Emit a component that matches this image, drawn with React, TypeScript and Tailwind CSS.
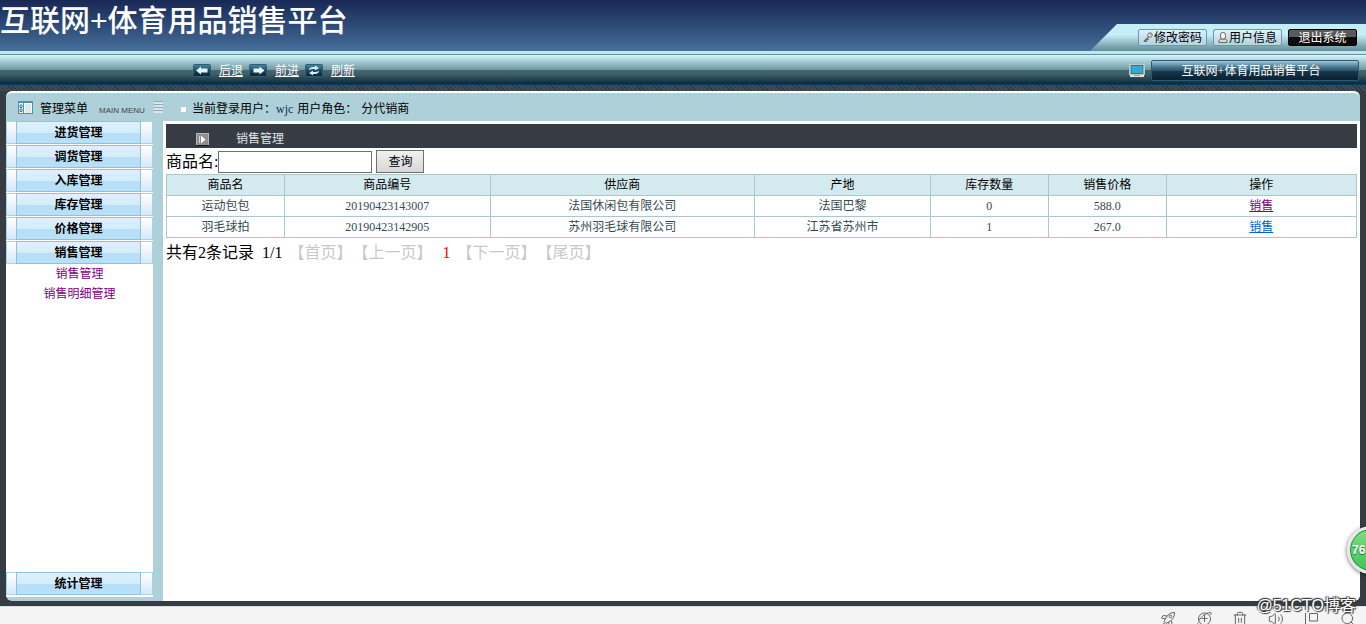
import { useState } from "react";
import { Search, Trash2, Volume2 } from "lucide-react";

interface Product {
  name: string;
  code: string;
  supplier: string;
  origin: string;
  stock: number;
  price: string;
  visited: boolean;
}

interface MenuGroup {
  title: string;
  children: string[];
}

const products: Product[] = [
  {
    name: "运动包包",
    code: "20190423143007",
    supplier: "法国休闲包有限公司",
    origin: "法国巴黎",
    stock: 0,
    price: "588.0",
    visited: true,
  },
  {
    name: "羽毛球拍",
    code: "20190423142905",
    supplier: "苏州羽毛球有限公司",
    origin: "江苏省苏州市",
    stock: 1,
    price: "267.0",
    visited: false,
  },
];

const menuGroups: MenuGroup[] = [
  { title: "进货管理", children: [] },
  { title: "调货管理", children: [] },
  { title: "入库管理", children: [] },
  { title: "库存管理", children: [] },
  { title: "价格管理", children: [] },
  { title: "销售管理", children: ["销售管理", "销售明细管理"] },
  { title: "统计管理", children: [] },
];

const columns = [
  { label: "商品名", width: "w-[9.9%]" },
  { label: "商品编号", width: "w-[17.3%]" },
  { label: "供应商", width: "w-[22.2%]" },
  { label: "产地", width: "w-[14.8%]" },
  { label: "库存数量", width: "w-[9.9%]" },
  { label: "销售价格", width: "w-[9.9%]" },
  { label: "操作", width: "w-[16%]" },
];

function ToolIcon({ kind }: { kind: "back" | "forward" | "refresh" }) {
  return (
    <svg width="18" height="13" viewBox="0 0 18 13" aria-hidden="true">
      <defs>
        <linearGradient id={`tool-${kind}`} x1="0" y1="0" x2="0" y2="1">
          <stop offset="0" stopColor="#4d8ba3" />
          <stop offset="0.5" stopColor="#1d4860" />
          <stop offset="1" stopColor="#0c2133" />
        </linearGradient>
      </defs>
      <rect x="0.5" y="0.5" width="17" height="12" rx="1" fill={`url(#tool-${kind})`} stroke="#2c5f74" />
      {kind === "back" && <path d="M3 6.5 8 2.5V4.500h6.500v4H8v2z" fill="#dff8ff" />}
      {kind === "forward" && <path d="M15.500 6.500 10.500 2.500V4.500H4.500v4h6v2z" fill="#dff8ff" />}
      {kind === "refresh" && (
        <g fill="#cdeffa">
          <path d="M4 6.200C4 4 6 3 8 3h2V1.500L14 4l-4 2.500V5H8C6.500 5 5.500 5.300 4 6.200z" />
          <path d="M14 6.800C14 9 12 10 10 10H8v1.500L4 9l4-2.500V8h2c1.500 0 2.500-.3 4-1.200z" />
        </g>
      )}
    </svg>
  );
}

function KeyIcon() {
  return (
    <svg width="10" height="11" viewBox="0 0 10 11" fill="none" aria-hidden="true">
      <path d="M5.500 5 1 9.500M2.500 8l1.500 1.500M4 6.500 5.500 8" stroke="#666" strokeWidth="1.500" />
      <circle cx="7" cy="3" r="2.200" fill="#f3f3f3" stroke="#666" />
      <circle cx="7.500" cy="2.500" r="0.600" fill="#555" />
    </svg>
  );
}

function UserIcon() {
  return (
    <svg width="10" height="11" viewBox="0 0 10 11" aria-hidden="true">
      <path d="M1 10.500V9c0-1.200 1-2 2.200-2h3.600C8 7 9 7.800 9 9v1.500z" fill="#d9d9d9" stroke="#666" />
      <rect x="2.500" y="0.500" width="5" height="6.500" rx="2.300" fill="#f5f5f5" stroke="#666" />
    </svg>
  );
}

function MonitorIcon() {
  return (
    <svg width="16" height="13" viewBox="0 0 16 13" aria-hidden="true">
      <rect x="0.500" y="0.500" width="15" height="10" fill="#f3f3e2" stroke="#b9cbbd" />
      <rect x="2" y="1.500" width="12" height="8" fill="#3da5cf" stroke="#1d7e92" />
      <path d="M1 11h14v2H1z" fill="#e4e6d8" />
      <path d="M5 11.500h6" stroke="#8aa39b" />
    </svg>
  );
}

function PanelIcon() {
  return (
    <svg width="15" height="13" viewBox="0 0 15 13" className="mb-1" aria-hidden="true">
      <rect x="0.500" y="0.500" width="14" height="12" fill="#f4fafc" stroke="#4a94ad" />
      <path d="M0 0h15v2H0z" fill="#4a94ad" />
      <path d="M5.500 2v10" stroke="#4a94ad" />
      <path d="M2 4h2v2.500H2zM2 8h2v2.500H2z" fill="none" stroke="#367b97" />
      <path d="M7 3h6v9H7z" fill="#e2e7e8" />
    </svg>
  );
}

function PlayIcon() {
  return (
    <svg width="13" height="13" viewBox="0 0 13 13" aria-hidden="true">
      <rect x="0.500" y="0.500" width="12" height="12" fill="#8e8e8e" stroke="#b5b5b5" />
      <path d="M0 12.500h13" stroke="#16181b" />
      <path d="M3.500 3v7" stroke="#d8d8d8" />
      <path d="M5 2.500 9.500 6.500 5 10.500z" fill="#fff" />
    </svg>
  );
}

function Header() {
  return (
    <header className="flex h-[51px] items-start justify-between bg-linear-to-b from-[#192855] to-[#46709a]">
      <h1 className="font-['Liberation_Sans','Noto_Sans_CJK_SC',sans-serif] text-[30px] leading-[42px] font-medium whitespace-nowrap text-white">
        互联网+体育用品销售平台
      </h1>
      <div className="flex h-[27px] items-center gap-1.5 self-end bg-linear-to-b from-[#c5eff8] from-40% to-[#648c96] pr-[9px] pl-12 [clip-path:polygon(27px_0,100%_0,100%_100%,0_100%)]">
        <button className="flex h-[17px] w-[69px] items-center justify-center gap-px rounded-xs border border-[#6a95b8] bg-linear-to-b from-[#dff1fd] to-[#b3d3dd] text-xs leading-none whitespace-nowrap text-black">
          <KeyIcon />
          修改密码
        </button>
        <button className="flex h-[17px] w-[69px] items-center justify-center gap-px rounded-xs border border-[#6a95b8] bg-linear-to-b from-[#dff1fd] to-[#b3d3dd] text-xs leading-none whitespace-nowrap text-black">
          <UserIcon />
          用户信息
        </button>
        <button className="flex h-[17px] w-[69px] items-center justify-center rounded-xs border border-black bg-linear-to-b from-[#5a5a5a] from-50% to-[#0c0c0c] to-50% text-xs leading-none text-white">
          退出系统
        </button>
      </div>
    </header>
  );
}

function Toolbar() {
  return (
    <div className="border-t-[3px] border-[#bce8f2]">
      <div className="flex h-[31px] items-center justify-between border-t border-b border-t-[#5f919b] border-b-[#0a3a5c] bg-[linear-gradient(#d9f6fb,#b3dae2_15%,#7199a2_50%,#45666f_51%,#3e606a_65%,#0d2939)] pt-0.5 pr-[7px] pl-[193px]">
        <nav className="flex items-center gap-1.5 text-xs text-white">
          <a href="#back" className="flex w-[50px] items-center justify-between">
            <ToolIcon kind="back" />
            <span className="underline">后退</span>
          </a>
          <a href="#forward" className="flex w-[50px] items-center justify-between">
            <ToolIcon kind="forward" />
            <span className="underline">前进</span>
          </a>
          <a href="#refresh" className="flex w-[50px] items-center justify-between">
            <ToolIcon kind="refresh" />
            <span className="underline">刷新</span>
          </a>
        </nav>
        <div className="flex items-center gap-1.5">
          <MonitorIcon />
          <div className="flex h-[21px] w-[208px] items-center justify-center rounded-xs border border-[#2b5b70] bg-[linear-gradient(#9cc9da,#416f87_35%,#2c5670_50%,#16384e_55%,#0a1f2f)] pr-2 text-xs text-white">
            互联网+体育用品销售平台
          </div>
        </div>
      </div>
    </div>
  );
}

function Sidebar() {
  const [openMenu, setOpenMenu] = useState("销售管理");

  return (
    <nav className="mb-1 flex w-[147px] shrink-0 flex-col bg-white pb-px text-xs">
      {menuGroups.map((group) => (
        <div
          key={group.title}
          className={openMenu === group.title ? "flex flex-1 flex-col" : "pb-px"}
        >
          <button
            onClick={() => setOpenMenu(group.title)}
            className="flex h-[23px] w-full shrink-0 border border-[#a8d3ea] bg-linear-to-b from-white to-[#d5e9f8] pr-[11px] pl-[9px] font-bold text-black"
          >
            <span className="-my-px flex h-[23px] flex-1 items-center justify-center border border-[#8ec1de] bg-[linear-gradient(#def1fb,#d3edfa_50%,#b5def8_51%,#b9e0f8)]">
              {group.title}
            </span>
          </button>
          {openMenu === group.title && (
            <ul className="flex-1 text-center leading-5 text-[#800080]">
              {group.children.map((child) => (
                <li key={child}>
                  <a href="#menu">{child}</a>
                </li>
              ))}
            </ul>
          )}
        </div>
      ))}
    </nav>
  );
}

function SalesTable() {
  return (
    <table className="w-full table-fixed border-collapse text-center text-xs leading-5">
      <thead>
        <tr className="h-[21px] bg-[#d3eaee] text-black">
          {columns.map((column) => (
            <th
              key={column.label}
              className={`${column.width} border border-[#a8c7ce] p-0 font-normal`}
            >
              {column.label}
            </th>
          ))}
        </tr>
      </thead>
      <tbody className="text-[#344b50]">
        {products.map((product) => (
          <tr key={product.code} className="h-[21px]">
            <td className="border border-[#a8c7ce] p-0">{product.name}</td>
            <td className="border border-[#a8c7ce] p-0">{product.code}</td>
            <td className="border border-[#a8c7ce] p-0">{product.supplier}</td>
            <td className="border border-[#a8c7ce] p-0">{product.origin}</td>
            <td className="border border-[#a8c7ce] p-0">{product.stock}</td>
            <td className="border border-[#a8c7ce] p-0">{product.price}</td>
            <td className="border border-[#a8c7ce] p-0">
              <a
                href="#sell"
                className={product.visited ? "text-[#800080] underline" : "text-[#0066cc] underline"}
              >
                销售
              </a>
            </td>
          </tr>
        ))}
      </tbody>
    </table>
  );
}

function Content() {
  return (
    <main className="ml-2.5 flex-1 bg-white px-[3px] pt-[3px]">
      <h2 className="flex h-6 items-center gap-[27px] bg-[#353c44] pt-1.5 pl-[30px] text-xs text-[#e1e2e3]">
        <PlayIcon />
        销售管理
      </h2>
      <form className="flex h-[26px] items-center pt-px text-base" onSubmit={(e) => e.preventDefault()}>
        <label htmlFor="product-name">商品名:</label>
        <input
          id="product-name"
          type="text"
          className="h-[22px] w-[154px] border border-[#707070] bg-white px-1 text-sm outline-none"
        />
        <button className="ml-1 flex h-[23px] w-12 items-center justify-center border border-[#707070] bg-linear-to-b from-[#f0f0f0] to-[#d8d8d8] text-xs">
          查询
        </button>
      </form>
      <SalesTable />
      <div className="flex pt-[3px] leading-6 whitespace-nowrap text-[#c9c9c9]">
        <span className="mr-2 text-black">共有2条记录</span>
        <span className="mr-1.5 text-black">1/1</span>
        <span>【首页】</span>
        <span>【上一页】</span>
        <span className="mr-1.5 ml-2.5 text-[#f00]">1</span>
        <span>【下一页】</span>
        <span>【尾页】</span>
      </div>
    </main>
  );
}

function StatusBar() {
  return (
    <footer className="flex h-[18px] shrink-0 items-start justify-end gap-[20px] overflow-hidden border-t border-[#ddd] bg-[#f4f4f4] pt-1 pr-2.5 text-[#666]">
      <svg width="16" height="16" viewBox="0 0 16 16" fill="none" stroke="currentColor" aria-hidden="true">
        <path d="M14.500 1.500C11 1.500 8.500 3 6.500 6L4 10.500l2 2L10.500 10c3-2 4-5 4-8.500z" />
        <path d="M7 5 3 4.500 1.500 7 5.500 8M11.500 9.500l.5 4-2.500 1.500-1-4M5 11.500l-3.500 3" />
        <circle cx="10.500" cy="5.500" r="1.300" />
      </svg>
      <svg width="16" height="16" viewBox="0 0 16 16" fill="none" stroke="currentColor" aria-hidden="true">
        <circle cx="8.500" cy="8" r="6" />
        <path d="M8.500 4v7M5.500 7.500h6M2.500 11.500C.5 13.500.5 15 2.500 14.500M3 9.500C5 5.500 10 2 14 1.500c1.500 0 1.500 1 .5 2.500" />
      </svg>
      <Trash2 size={16} strokeWidth={1.5} />
      <Volume2 size={16} strokeWidth={1.5} />
      <svg width="16" height="16" viewBox="0 0 16 16" fill="none" stroke="currentColor" aria-hidden="true">
        <path d="M5.500 2.500h8v7.500h-8zM1.500 2v12h11" />
      </svg>
      <Search size={16} strokeWidth={1.5} />
    </footer>
  );
}

export default function App() {
  return (
    <div className="relative flex h-screen flex-col overflow-hidden bg-[#353c44] font-['Liberation_Serif','Noto_Sans_CJK_SC',serif] text-black">
      <Header />
      <Toolbar />
      <div className="h-1.5 shrink-0 bg-[repeating-linear-gradient(45deg,#2c3945_0px,#2c3945_1px,#3d4c59_1px,#3d4c59_3px)]" />

      <div className="mx-1.5 mb-[5px] flex min-h-0 flex-1 flex-col overflow-hidden rounded-md border-t-2 border-white bg-[#aed1d9]">
        <div className="flex h-7 shrink-0 items-center text-xs whitespace-nowrap">
          <div className="flex w-[157px] items-center pt-1 pl-3">
            <PanelIcon />
            <span className="ml-[7px]">管理菜单</span>
            <span className="ml-[11px] pt-1 font-['Liberation_Sans',sans-serif] text-[8px] text-[#444]">
              MAIN MENU
            </span>
            <span className="mb-1 ml-auto h-3 w-[9px] bg-[repeating-linear-gradient(#8fa9ae_0px,#8fa9ae_1px,#d6e8ec_1px,#d6e8ec_3px)]" />
          </div>
          <div className="flex items-center gap-1 pt-1 pl-[18px]">
            <span className="mr-0.5 size-[5px] bg-white" />
            <span>
              当前登录用户：<span className="text-[#1c2a5c]">wjc</span>
            </span>
            <span>用户角色：</span>
            <span>分代销商</span>
          </div>
        </div>
        <div className="flex min-h-0 flex-1">
          <Sidebar />
          <Content />
        </div>
      </div>

      <StatusBar />

      {/* Floating speed meter */}
      <div className="absolute right-[-29px] bottom-[50px] flex size-12 items-center rounded-full border-[3px] border-[#e8e8e8] bg-linear-to-b from-[#7cdc84] to-[#3cc455] pl-0.5 font-['Liberation_Sans',sans-serif] text-xs font-bold text-white shadow-[0_1px_4px_rgba(0,0,0,0.6),inset_0_0_0_1px_#1b8a4a] [text-shadow:0_1px_1px_#146b2c]">
        76
      </div>

      {/* Watermark */}
      <div className="absolute right-2.5 bottom-[6px] font-['Liberation_Sans','Noto_Sans_CJK_SC',sans-serif] text-base leading-6 text-white [text-shadow:-1px_-1px_1px_#333,1px_1px_1px_#333,1px_-1px_1px_#555]">
        @51CTO博客
      </div>
    </div>
  );
}
